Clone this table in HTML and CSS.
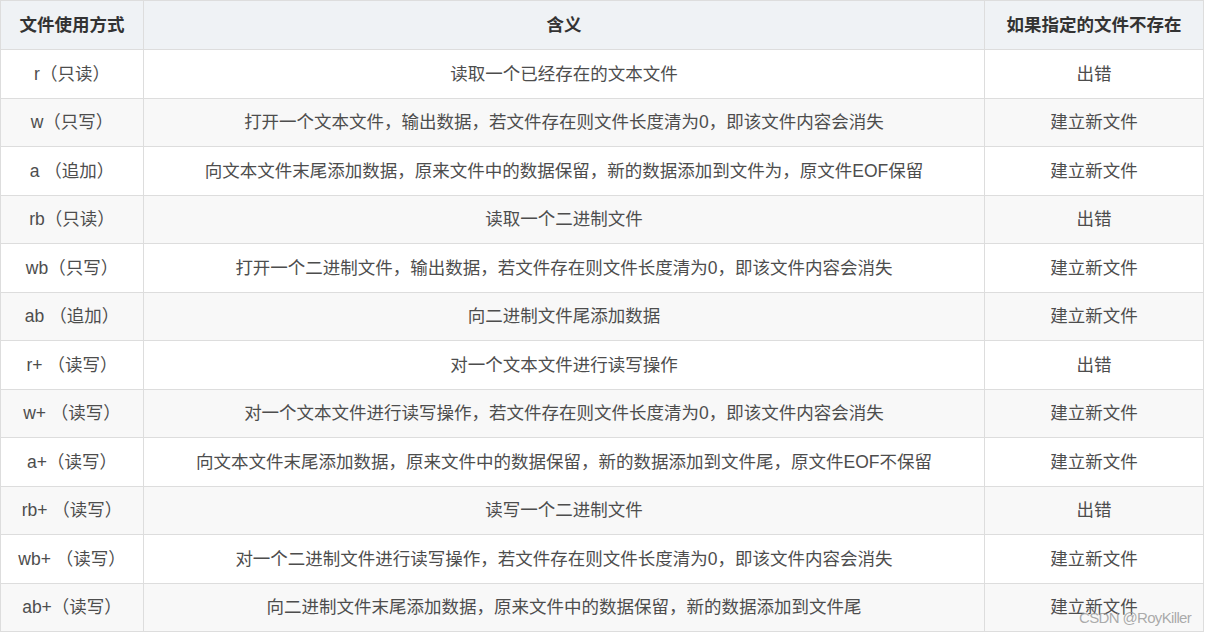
FILE: index.html
```html
<!DOCTYPE html>
<html lang="zh">
<head>
<meta charset="utf-8">
<link rel="stylesheet" href="styles.css">
</head>
<body>
<div class="wrap">
<table class="modes">
  <colgroup>
    <col class="c1"><col class="c2"><col class="c3">
  </colgroup>
  <thead>
    <tr><th>文件使用方式</th><th>含义</th><th>如果指定的文件不存在</th></tr>
  </thead>
  <tbody>
    <tr><td>r（只读）</td><td>读取一个已经存在的文本文件</td><td>出错</td></tr>
    <tr><td>w（只写）</td><td>打开一个文本文件，输出数据，若文件存在则文件长度清为0，即该文件内容会消失</td><td>建立新文件</td></tr>
    <tr><td>a （追加）</td><td>向文本文件末尾添加数据，原来文件中的数据保留，新的数据添加到文件为，原文件EOF保留</td><td>建立新文件</td></tr>
    <tr><td>rb（只读）</td><td>读取一个二进制文件</td><td>出错</td></tr>
    <tr><td>wb（只写）</td><td>打开一个二进制文件，输出数据，若文件存在则文件长度清为0，即该文件内容会消失</td><td>建立新文件</td></tr>
    <tr><td>ab （追加）</td><td>向二进制文件尾添加数据</td><td>建立新文件</td></tr>
    <tr><td>r+ （读写）</td><td>对一个文本文件进行读写操作</td><td>出错</td></tr>
    <tr><td>w+ （读写）</td><td>对一个文本文件进行读写操作，若文件存在则文件长度清为0，即该文件内容会消失</td><td>建立新文件</td></tr>
    <tr><td>a+（读写）</td><td>向文本文件末尾添加数据，原来文件中的数据保留，新的数据添加到文件尾，原文件EOF不保留</td><td>建立新文件</td></tr>
    <tr><td>rb+ （读写）</td><td>读写一个二进制文件</td><td>出错</td></tr>
    <tr><td>wb+ （读写）</td><td>对一个二进制文件进行读写操作，若文件存在则文件长度清为0，即该文件内容会消失</td><td>建立新文件</td></tr>
    <tr><td>ab+（读写）</td><td>向二进制文件末尾添加数据，原来文件中的数据保留，新的数据添加到文件尾</td><td>建立新文件</td></tr>
  </tbody>
</table>
<div class="watermark">CSDN @RoyKiller</div>
</div>
</body>
</html>
```
FILE: styles.css
```css
html, body {
  margin: 0;
  padding: 0;
  background: #ffffff;
}
.wrap {
  position: relative;
  width: 1206px;
  height: 635px;
}
.modes {
  border-collapse: collapse;
  width: 1203px;
  table-layout: fixed;
  font-family: "Liberation Sans", "Noto Sans CJK SC", sans-serif;
  font-size: 17.5px;
  color: #4d4d4d;
}
.c1 { width: 143px; }
.c2 { width: 841px; }
.c3 { width: 219px; }
.modes th, .modes td {
  border: 1px solid #dddddd;
  text-align: center;
  vertical-align: middle;
  padding: 0 6px;
  line-height: 24px;
  white-space: pre;
}
.modes th {
  height: 48px;
  background: #eff2f5;
  color: #333333;
  font-weight: bold;
}
.modes td {
  height: 47.5px;
}
.modes tbody tr:nth-child(even) td {
  background: #f8f8f8;
}
.watermark {
  position: absolute;
  left: 1079px;
  top: 609px;
  font-family: "Liberation Sans", sans-serif;
  font-size: 15px;
  letter-spacing: -0.65px;
  color: rgba(150, 150, 150, 0.8);
  line-height: 18px;
}
```
